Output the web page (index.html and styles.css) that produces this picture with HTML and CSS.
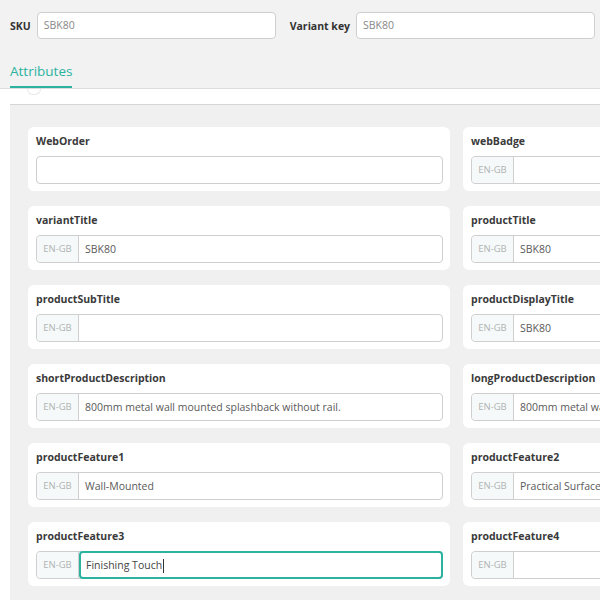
FILE: index.html
```html
<!DOCTYPE html>
<html>
<head>
<meta charset="utf-8">
<link rel="stylesheet" href="styles.css">
</head>
<body>
<div class="top">
  <label class="top-label">SKU</label>
  <div class="top-input">SBK80</div>
  <label class="top-label vk">Variant key</label>
  <div class="top-input">SBK80</div>
</div>
<div class="tabs">
  <div class="tab active">Attributes</div>
</div>
<div class="tab-body">
  <span class="knob"></span>
  <div class="panel">
    <div class="grid">
      <div class="card">
        <div class="label">WebOrder</div>
        <div class="field plain"><div class="value"></div></div>
      </div>
      <div class="card">
        <div class="label">webBadge</div>
        <div class="field"><span class="addon">EN-GB</span><div class="value"></div></div>
      </div>
      <div class="card">
        <div class="label">variantTitle</div>
        <div class="field"><span class="addon">EN-GB</span><div class="value">SBK80</div></div>
      </div>
      <div class="card">
        <div class="label">productTitle</div>
        <div class="field"><span class="addon">EN-GB</span><div class="value">SBK80</div></div>
      </div>
      <div class="card">
        <div class="label">productSubTitle</div>
        <div class="field"><span class="addon">EN-GB</span><div class="value"></div></div>
      </div>
      <div class="card">
        <div class="label">productDisplayTitle</div>
        <div class="field"><span class="addon">EN-GB</span><div class="value">SBK80</div></div>
      </div>
      <div class="card">
        <div class="label">shortProductDescription</div>
        <div class="field"><span class="addon">EN-GB</span><div class="value">800mm metal wall mounted splashback without rail.</div></div>
      </div>
      <div class="card">
        <div class="label">longProductDescription</div>
        <div class="field"><span class="addon">EN-GB</span><div class="value">800mm metal wall mounted splashback without rail.</div></div>
      </div>
      <div class="card">
        <div class="label">productFeature1</div>
        <div class="field"><span class="addon">EN-GB</span><div class="value">Wall-Mounted</div></div>
      </div>
      <div class="card">
        <div class="label">productFeature2</div>
        <div class="field"><span class="addon">EN-GB</span><div class="value">Practical Surface</div></div>
      </div>
      <div class="card">
        <div class="label">productFeature3</div>
        <div class="field"><span class="addon">EN-GB</span><div class="value focus">Finishing Touch<span class="caret"></span></div></div>
      </div>
      <div class="card">
        <div class="label">productFeature4</div>
        <div class="field"><span class="addon">EN-GB</span><div class="value"></div></div>
      </div>
    </div>
  </div>
</div>
</body>
</html>
```
FILE: styles.css
```css
html, body {
  margin: 0;
  padding: 0;
}
body {
  width: 600px;
  height: 600px;
  overflow: hidden;
  background: #f2f2f2;
  font-family: "Open Sans", "Noto Sans", sans-serif;
  color: #333;
}
.top {
  display: flex;
  align-items: center;
  padding: 12px 0 0 10px;
  height: 27px;
}
.top-label {
  font-size: 10.5px;
  font-weight: 700;
  color: #333;
  margin-right: 6px;
}
.top-label.vk {
  margin-left: 14px;
  margin-right: 6px;
}
.top-input {
  box-sizing: border-box;
  width: 239px;
  height: 27px;
  background: #fff;
  border: 1px solid #cfcfcf;
  border-radius: 4px;
  font-size: 10.5px;
  color: #888;
  line-height: 25px;
  padding-left: 6px;
}
.tabs {
  padding: 0 0 0 10px;
  margin-top: 20px;
  height: 29px;
}
.tab {
  display: inline-block;
  box-sizing: border-box;
  height: 29px;
  font-size: 13.5px;
  color: #2bb3a0;
  border-bottom: 3px solid #2bb3a0;
  line-height: 22px;
}
.tab-body {
  position: relative;
  background: #fff;
  border-top: 1px solid #dcdcdc;
  padding: 15px 0 10px 10px;
}
.knob {
  position: absolute;
  left: 27px;
  top: 0;
  width: 12px;
  height: 5px;
  border-radius: 0 0 7px 7px;
  background: #fff;
  border: 1px solid #e8e8e8;
  border-top: none;
}
.panel {
  background: #f0f0f0;
  border-top: 1px solid #d6d6d6;
  padding: 22px 0 16px 18px;
  height: 470px;
}
.grid {
  display: grid;
  grid-template-columns: 422px 422px;
  column-gap: 13px;
  row-gap: 15px;
}
.card {
  background: #fff;
  border-radius: 6px;
  padding: 6px 7px 7px 8px;
  height: 51px;
}
.label {
  font-size: 10.5px;
  font-weight: 700;
  color: #3a3a3a;
  height: 16px;
  line-height: 16px;
  margin-bottom: 7px;
}
.field {
  display: flex;
  height: 28px;
  box-sizing: border-box;
  border: 1px solid #cfcfcf;
  border-radius: 4px;
  background: #fff;
}
.addon {
  flex: 0 0 41px;
  background: #f6f9f9;
  border-right: 1px solid #cfcfcf;
  border-radius: 4px 0 0 4px;
  font-size: 9.5px;
  color: #b0b4b4;
  text-align: center;
  line-height: 26px;
}
.value {
  flex: 1;
  font-size: 10.5px;
  color: #5a5a5a;
  line-height: 26px;
  padding-left: 6px;
  white-space: nowrap;
  overflow: hidden;
}
.value.focus {
  margin: -1px -1px -1px 0;
  border: 2px solid #2bb3a0;
  border-radius: 4px;
  line-height: 24px;
  padding-left: 5px;
  color: #444;
}
.caret {
  display: inline-block;
  width: 1px;
  height: 14px;
  background: #333;
  vertical-align: middle;
  margin-left: 1px;
}
```
